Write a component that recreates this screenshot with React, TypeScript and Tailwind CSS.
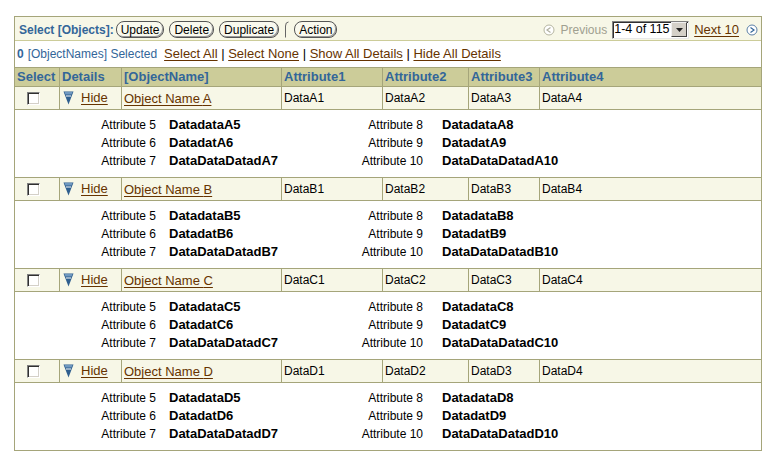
import React from 'react';

const blue = 'text-[#336699]';
const link = 'text-[13px] text-[#663300] underline underline-offset-[2px]';

const cols = [
  { label: 'Select', w: 'w-[45px]' },
  { label: 'Details', w: 'w-[62px]' },
  { label: '[ObjectName]', w: 'w-[160px]' },
  { label: 'Attribute1', w: 'w-[101px]' },
  { label: 'Attribute2', w: 'w-[86px]' },
  { label: 'Attribute3', w: 'w-[71px]' },
  { label: 'Attribute4', w: 'flex-1' },
];

function Btn({ children }: { children: React.ReactNode }) {
  return (
    <button className="h-[17px] px-[4px] rounded-[8px] border border-[#555] bg-[#f9f9ee] text-[12px] leading-[14px] text-black shadow-[inset_-1px_-1px_0_#999]">
      {children}
    </button>
  );
}

function Checkbox() {
  return <div className="w-[13px] h-[13px] bg-white border border-[#808080] border-r-white border-b-white shadow-[inset_1px_1px_0_#303030,inset_-1px_-1px_0_#d4d0c8]" />;
}

function Disclosure() {
  return (
    <svg width="11" height="14" viewBox="0 0 11 14">
      <polygon points="0.5,0.5 10.5,0.5 5.5,13.5" fill="#2f5f8f" />
      <polygon points="1.5,1 9.5,1 8.6,3.5 2.4,3.5" fill="#6f98c0" />
      <line x1="3" y1="5" x2="8" y2="5" stroke="#ffffff" strokeWidth="1" />
    </svg>
  );
}

function NavCircle({ dir, active }: { dir: 'prev' | 'next'; active?: boolean }) {
  const c = active ? '#5b7fa6' : '#b5b5a0';
  const a = active ? '#336699' : '#b0b0a0';
  return (
    <svg width="12" height="12" viewBox="0 0 12 12">
      <circle cx="6" cy="6" r="5" fill="#fff" stroke={c} strokeWidth="1" />
      {dir === 'prev'
        ? <path d="M7.5 3.5 L4 6 L7.5 8.5" fill="none" stroke={a} strokeWidth="1.2" />
        : <path d="M4.5 3.5 L8 6 L4.5 8.5" fill="none" stroke={a} strokeWidth="1.2" />}
    </svg>
  );
}

function ObjectGroup({ k }: { k: string }) {
  const left = [
    ['Attribute 5', `Datadata${k}5`],
    ['Attribute 6', `Datadat${k}6`],
    ['Attribute 7', `DataDataDatad${k}7`],
  ];
  const right = [
    ['Attribute 8', `Datadata${k}8`],
    ['Attribute 9', `Datadat${k}9`],
    ['Attribute 10', `DataDataDatad${k}10`],
  ];
  return (
    <>
      <div className="flex h-[23px] bg-[#f7f7e7] border-b border-[#a5a57a] text-[12px] text-black">
        <div className="w-[45px] border-r border-[#a5a57a] flex items-center pl-[12px]"><Checkbox /></div>
        <div className="w-[62px] border-r border-[#a5a57a] flex items-center pl-[3px] gap-[7px]">
          <Disclosure />
          <a className={link}>Hide</a>
        </div>
        <div className="w-[160px] border-r border-[#a5a57a] flex items-center pl-[2px] pt-[2px]">
          <a className={link}>Object Name {k}</a>
        </div>
        <div className="w-[101px] border-r border-[#a5a57a] flex items-center pl-[2px]">Data{k}1</div>
        <div className="w-[86px] border-r border-[#a5a57a] flex items-center pl-[2px]">Data{k}2</div>
        <div className="w-[71px] border-r border-[#a5a57a] flex items-center pl-[2px]">Data{k}3</div>
        <div className="flex-1 flex items-center pl-[2px]">Data{k}4</div>
      </div>
      <div className="h-[68px] bg-white border-b border-[#a5a57a] pt-[6px] text-[12px] leading-[18px] text-black">
        {left.map((l, i) => (
          <div key={i} className="flex">
            <div className="w-[141px] text-right">{l[0]}</div>
            <div className="w-[171px] ml-[13px] font-bold text-[13px]">{l[1]}</div>
            <div className="w-[83px] text-right">{right[i][0]}</div>
            <div className="ml-[19px] font-bold text-[13px]">{right[i][1]}</div>
          </div>
        ))}
      </div>
    </>
  );
}

export default function App() {
  return (
    <div className="w-[780px] h-[462px] bg-white pt-[16px] pl-[14px] font-['Liberation_Sans',Arial,sans-serif]">
      <div className="w-[748px] border border-[#a5a57a] border-b-0">
        {/* Toolbar */}
        <div className="h-[24px] bg-[#f7f7e7] border-b border-[#cccc99] flex items-center justify-between pl-[4px] pr-[3px] pt-[2px]">
          <div className="flex items-center">
            <span className={`text-[12px] font-bold ${blue}`}>Select [Objects]:</span>
            <div className="flex items-center gap-[5px] ml-[2px]">
              <Btn>Update</Btn>
              <Btn>Delete</Btn>
              <Btn>Duplicate</Btn>
              <svg width="5" height="17" viewBox="0 0 5 17">
                <path d="M4.5 1 Q1.5 1 1.5 5 L1.5 16.5" fill="none" stroke="#666" strokeWidth="1" />
              </svg>
              <Btn>Action</Btn>
            </div>
          </div>
          <div className="flex items-center text-[12px]">
            <NavCircle dir="prev" />
            <span className="ml-[6px] text-[#a0a090]">Previous</span>
            <div className="ml-[5px] w-[77px] h-[18px] bg-white flex items-center border border-[#808080] border-r-[#e8e8e8] border-b-[#e8e8e8] shadow-[inset_1px_1px_0_#303030]">
              <span className="flex-1 pl-[1px] text-[12.5px] leading-[15px] text-black whitespace-nowrap overflow-hidden">1-4 of 115</span>
              <div className="w-[16px] h-[15px] shrink-0 mr-[1px] bg-[#d4d0c8] flex items-center justify-center border border-[#f0f0f0] border-r-[#404040] border-b-[#404040]">
                <svg width="7" height="4" viewBox="0 0 7 4"><polygon points="0,0 7,0 3.5,4" fill="#222" /></svg>
              </div>
            </div>
            <a className={`ml-[5px] ${link}`}>Next 10</a>
            <span className="ml-[7px] flex"><NavCircle dir="next" active /></span>
          </div>
        </div>

        {/* Selection row */}
        <div className="h-[26px] bg-white flex items-center pl-[2px] text-[12px]">
          <span className={`font-bold ${blue}`}>0</span>
          <span className={`ml-[4px] ${blue}`}>[ObjectNames] Selected</span>
          <span className="ml-[7px] text-[13px] text-black whitespace-pre">
            <a className={link}>Select All</a>{' | '}
            <a className={link}>Select None</a>{' | '}
            <a className={link}>Show All Details</a>{' | '}
            <a className={link}>Hide All Details</a>
          </span>
        </div>

        {/* Header */}
        <div className="flex h-[20px] bg-[#cccc99] border-y border-[#a5a57a]">
          {cols.map((c, i) => (
            <div key={c.label} className={`${c.w} ${i < cols.length - 1 ? 'border-r border-[#a5a57a]' : ''} pl-[2px] flex items-center text-[13px] font-bold ${blue}`}>
              {c.label}
            </div>
          ))}
        </div>

        {['A', 'B', 'C', 'D'].map(k => <ObjectGroup key={k} k={k} />)}
      </div>
    </div>
  );
}
